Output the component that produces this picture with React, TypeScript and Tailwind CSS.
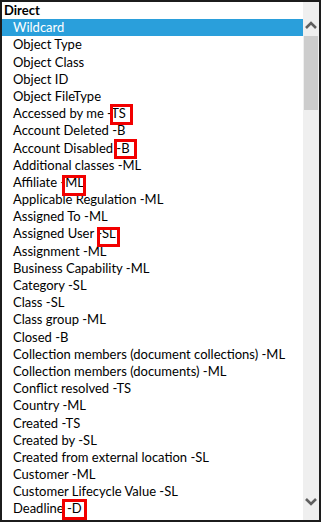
import React from "react";

const items: string[] = [
  "Object Type",
  "Object Class",
  "Object ID",
  "Object FileType",
  "Accessed by me -TS",
  "Account Deleted -B",
  "Account Disabled -B",
  "Additional classes -ML",
  "Affiliate -ML",
  "Applicable Regulation -ML",
  "Assigned To -ML",
  "Assigned User -SL",
  "Assignment -ML",
  "Business Capability -ML",
  "Category -SL",
  "Class -SL",
  "Class group -ML",
  "Closed -B",
  "Collection members (document collections) -ML",
  "Collection members (documents) -ML",
  "Conflict resolved -TS",
  "Country -ML",
  "Created -TS",
  "Created by -SL",
  "Created from external location -SL",
  "Customer -ML",
  "Customer Lifecycle Value -SL",
  "Deadline -D",
];

const boxes = [
  { l: 110, t: 104, w: 23, h: 21 },
  { l: 114, t: 139, w: 23, h: 20 },
  { l: 62, t: 175, w: 24, h: 21 },
  { l: 97, t: 227, w: 23, h: 20 },
  { l: 62, t: 499, w: 25, h: 21 },
];

export default function App() {
  return (
    <div
      className="relative w-[321px] h-[522px] overflow-hidden bg-white"
      style={{ fontFamily: 'Lato, "Open Sans", sans-serif' }}
    >
      <div className="flex w-[321px] h-[522px] border-2 border-[#1c1c1c] bg-white">
        <div className="flex-1 flex flex-col overflow-hidden text-[13px] leading-[17.2px] text-black">
          <div className="h-[17.2px] shrink-0 pl-[2px] font-bold">Direct</div>
          <div className="h-[17.2px] shrink-0 pl-[11px] bg-[#2a9fdb] text-white">Wildcard</div>
          {items.map((t) => (
            <div key={t} className="h-[17.2px] shrink-0 pl-[11px] whitespace-nowrap">
              {t}
            </div>
          ))}
        </div>
        <div className="w-[16px] shrink-0 flex flex-col bg-[#efefef]">
          <div className="h-[34px] shrink-0 flex justify-center pt-[19px]">
            <svg width="12" height="8" viewBox="0 0 12 8">
              <polyline points="1,7 6,2 11,7" fill="none" stroke="#606060" strokeWidth="2.6" />
            </svg>
          </div>
          <div className="h-[74px] shrink-0 mx-[1px] bg-[#cdcdcd]" />
          <div className="flex-1" />
          <div className="h-[24px] shrink-0 flex justify-center pt-[2px]">
            <svg width="12" height="8" viewBox="0 0 12 8">
              <polyline points="1,1 6,6 11,1" fill="none" stroke="#606060" strokeWidth="2.6" />
            </svg>
          </div>
        </div>
      </div>
      {boxes.map((b, i) => (
        <div
          key={i}
          className="absolute border-[3px] border-[#f20000]"
          style={{ left: b.l, top: b.t, width: b.w, height: b.h }}
        />
      ))}
    </div>
  );
}
